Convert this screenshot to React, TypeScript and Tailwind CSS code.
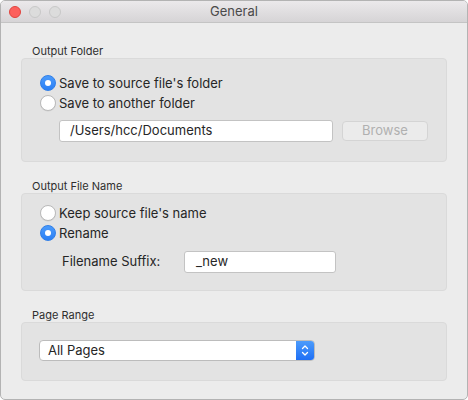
import React from "react";

function Radio({ checked }: { checked: boolean }) {
  if (checked) {
    return (
      <div className="w-[16px] h-[16px] rounded-full bg-gradient-to-b from-[#4b9bfb] to-[#2a7ff5] border border-[#2f7ee8] flex items-center justify-center shrink-0">
        <div className="w-[6px] h-[6px] rounded-full bg-white" />
      </div>
    );
  }
  return <div className="w-[16px] h-[16px] rounded-full bg-white border border-[#b9b9b9] shrink-0 shadow-[0_0.5px_0.5px_rgba(0,0,0,0.08)]" />;
}

function RadioRow({ checked, label }: { checked: boolean; label: string }) {
  return (
    <div className="h-[20px] flex items-center gap-[3px]">
      <Radio checked={checked} />
      <span className="text-[13px] text-[#262626] leading-none">{label}</span>
    </div>
  );
}

function GroupLabel({ children }: { children: React.ReactNode }) {
  return <div className="h-[14px] pl-[11px] text-[11px] leading-[14px] text-[#2e2e2e]">{children}</div>;
}

export default function App() {
  return (
    <div
      className="w-[468px] h-[400px] bg-[#ececec] border border-[#b3b3b3] rounded-[5px] overflow-hidden flex flex-col"
      style={{ fontFamily: "Inter, 'Liberation Sans', sans-serif" }}
    >
      <div className="h-[22px] shrink-0 relative flex items-center justify-center bg-gradient-to-b from-[#ebe9eb] to-[#d6d4d6] border-b border-[#c4c4c4]">
        <div className="absolute left-[8px] top-[5px] flex gap-[8px]">
          <div className="w-[12px] h-[12px] rounded-full bg-[#fc605c] border border-[#e0443e]" />
          <div className="w-[12px] h-[12px] rounded-full bg-[#dcdcdc] border border-[#c8c8c8]" />
          <div className="w-[12px] h-[12px] rounded-full bg-[#dcdcdc] border border-[#c8c8c8]" />
        </div>
        <span className="text-[13px] text-[#4a4a4a]">General</span>
      </div>

      <div className="px-[20px] pt-[21px] flex flex-col">
        <GroupLabel>Output Folder</GroupLabel>
        <div className="w-[426px] bg-[#e3e3e3] border border-[#dadada] rounded-[4px] pl-[18px] pt-[14px] pb-[19px]">
          <RadioRow checked label="Save to source file's folder" />
          <RadioRow checked={false} label="Save to another folder" />
          <div className="mt-[7px] flex items-center">
            <div className="ml-[19px] w-[274px] h-[22px] bg-white border border-[#c3c3c3] rounded-[3px] flex items-center pl-[10px] text-[13px] text-[#262626]">
              /Users/hcc/Documents
            </div>
            <div className="ml-[9px] w-[86px] h-[20px] bg-[#ebebeb] border border-[#d4d4d4] rounded-[4px] flex items-center justify-center text-[13px] text-[#b0b0b0]">
              Browse
            </div>
          </div>
        </div>

        <div className="mt-[17px]">
          <GroupLabel>Output File Name</GroupLabel>
        </div>
        <div className="w-[426px] bg-[#e3e3e3] border border-[#dadada] rounded-[4px] pl-[18px] pt-[9px] pb-[17px]">
          <RadioRow checked={false} label="Keep source file's name" />
          <RadioRow checked label="Rename" />
          <div className="mt-[8px] flex items-center">
            <span className="ml-[22px] w-[122px] text-[13px] text-[#262626]">Filename Suffix:</span>
            <div className="w-[152px] h-[22px] bg-white border border-[#c3c3c3] rounded-[3px] flex items-center pl-[11px] text-[13px] text-[#262626]">
              _new
            </div>
          </div>
        </div>

        <div className="mt-[17px]">
          <GroupLabel>Page Range</GroupLabel>
        </div>
        <div className="w-[426px] bg-[#e3e3e3] border border-[#dadada] rounded-[4px] pl-[17px] pt-[17px] pb-[19px]">
          <div className="w-[276px] h-[21px] flex rounded-[4px] border border-[#bcbcbc] overflow-hidden bg-white">
            <div className="flex-1 flex items-center pl-[8px] text-[13px] text-[#262626]">All Pages</div>
            <div className="w-[18px] bg-gradient-to-b from-[#4c9bfb] to-[#1f6ff5] flex items-center justify-center">
              <svg width="8" height="13" viewBox="0 0 8 13" fill="none" stroke="white" strokeWidth="1.3" strokeLinecap="round" strokeLinejoin="round">
                <path d="M1.5 4.5 L4 2 L6.5 4.5" />
                <path d="M1.5 8.5 L4 11 L6.5 8.5" />
              </svg>
            </div>
          </div>
        </div>
      </div>
    </div>
  );
}
